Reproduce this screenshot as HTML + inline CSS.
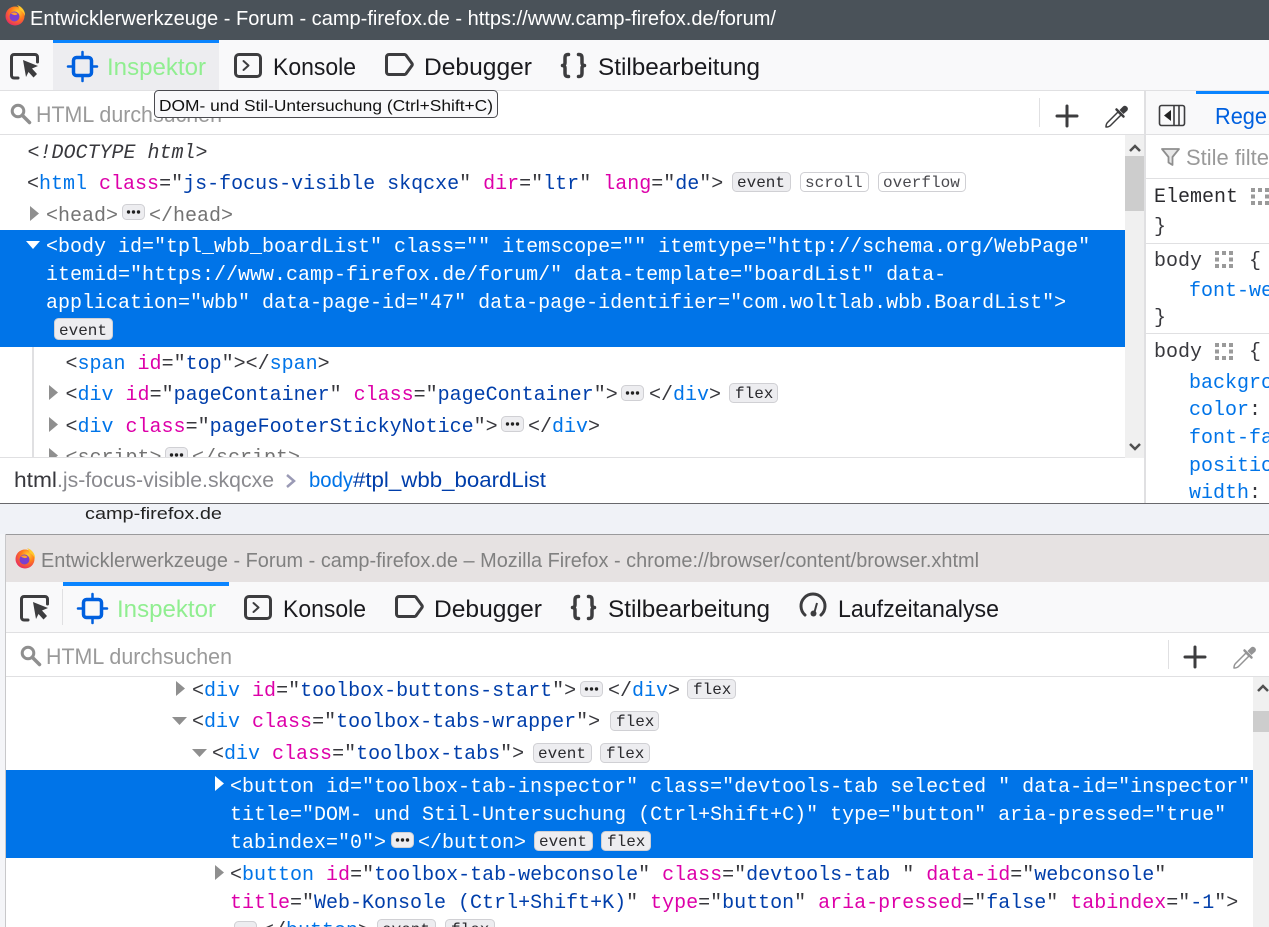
<!DOCTYPE html>
<html lang="de"><head><meta charset="utf-8"><title>Entwicklerwerkzeuge</title>
<style>
html,body{margin:0;padding:0;width:1269px;height:927px;overflow:hidden;background:#fff}
svg{display:block}
text{white-space:pre}
.s{font-family:"Liberation Sans",sans-serif}
.m{font-family:"Liberation Mono",monospace;font-size:20px;fill:#38383d}
.b{font-family:"Liberation Mono",monospace;font-size:16px;fill:#2a2a2e}
.tab{font-family:"Liberation Sans",sans-serif;font-size:24px;fill:#1a1a1e}
.ins{font-family:"Liberation Sans",sans-serif;font-size:24px;fill:#90ee90}
.g{font-family:"Liberation Sans",sans-serif;font-size:22px;fill:#9a9a9a}
.t{fill:#0074e8}.a{fill:#dd00a9}.v{fill:#003eaa}.d{fill:#737373}
.w{fill:#fff}.dg{fill:#38383d}
.ic{fill:none;stroke:#3d3d3f;stroke-width:3;stroke-linecap:round;stroke-linejoin:round}
</style></head><body>
<svg width="1269" height="927" viewBox="0 0 1269 927" xmlns="http://www.w3.org/2000/svg">
<defs>
<radialGradient id="ff" cx="65%" cy="30%" r="80%"><stop offset="0" stop-color="#ffd12e"/><stop offset=".45" stop-color="#ff7a1c"/><stop offset="1" stop-color="#e5236a"/></radialGradient>
<g id="fox"><circle cx="10" cy="11" r="9.500" fill="url(#ff)"/><path d="M12 0c5 1.500 8.500 6 8 11-1-3-3-5-5.500-6 0-2-1-3.500-2.500-5z" fill="#ffc72b"/><circle cx="9.500" cy="11.500" r="5" fill="#7a3fd0"/><path d="M6 8.500c2-1.500 5-1.500 6.500.5-1 1.500-4 1.500-6.500-.5z" fill="#ff9d2e"/></g>
<g id="pick"><path class="ic" d="M8 25H4a2.500 2.500 0 0 1-2.500-2.500V4A2.500 2.500 0 0 1 4 1.500h21A2.500 2.500 0 0 1 27.500 4v5"/><path d="M13 7l15 6-6 2.500 5 5.500-3.500 3.500-5-5.500L16 24z" fill="#3d3d3f"/></g>
<g id="insp"><rect x="5.500" y="5.500" width="18" height="18" rx="3" fill="none" stroke="#0060df" stroke-width="3.500"/><path d="M14.500 0v5M14.500 24v5M0 14.500h5M24 14.500h5" stroke="#0060df" stroke-width="2.500" stroke-linecap="round"/></g>
<g id="con"><rect x="1.500" y="1.500" width="25" height="22" rx="3.500" class="ic"/><path d="M9.500 8l5 4.500-5 4.500" fill="none" stroke="#3d3d3f" stroke-width="2" stroke-linecap="round" stroke-linejoin="round"/></g>
<g id="dbg"><path class="ic" d="M4 1.500h15.500a2 2 0 0 1 1.500.7l6 8.300a2 2 0 0 1 0 2l-6 8.300a2 2 0 0 1-1.500.7H4a2.500 2.500 0 0 1-2.500-2.500V4A2.500 2.500 0 0 1 4 1.500z"/></g>
<g id="sty"><path d="M7.500 1.500C4 1.500 4 3 4 6v4c0 1.500-1 2.500-2.500 2.500C3 12.500 4 13.500 4 15v4c0 3 0 4.500 3.500 4.500M17.500 1.500C21 1.500 21 3 21 6v4c0 1.500 1 2.500 2.500 2.500-1.500 0-2.500 1-2.500 2.500v4c0 3 0 4.500-3.500 4.500" fill="none" stroke="#3d3d3f" stroke-width="3.500" stroke-linecap="round" stroke-linejoin="round"/></g>
<g id="mag"><circle cx="8" cy="8" r="5.800" fill="none" stroke="#8f8f8f" stroke-width="3"/><path d="M12.500 12.500l7 7" stroke="#8f8f8f" stroke-width="3.500" stroke-linecap="round"/></g>
<g id="plus"><path d="M11 1v20M1 11h20" stroke="#3d3d3f" stroke-width="3" stroke-linecap="round"/></g>
<g id="drop"><path d="M13 8L2.500 18.500C1.500 19.500 1 21.500 1 23c1.500 0 3.500-.5 4.500-1.500L16 11z" fill="#fff" stroke="#3d3d3f" stroke-width="1.500" stroke-linejoin="round"/><path d="M11.500 5.500l7 7" stroke="#3d3d3f" stroke-width="2.500" stroke-linecap="round"/><path d="M14.500 6l3.500-3.500a3 3 0 0 1 4.200 4.200L18.500 10z" fill="#3d3d3f"/></g>
<g id="dots"><rect x="0" y="0" width="4" height="4"/><rect x="7" y="0" width="4" height="4"/><rect x="14" y="0" width="4" height="4"/><rect x="0" y="6.500" width="4" height="4"/><rect x="14" y="6.500" width="4" height="4"/><rect x="0" y="13" width="4" height="4"/><rect x="7" y="13" width="4" height="4"/><rect x="14" y="13" width="4" height="4"/></g>
<g id="more"><rect x=".5" y=".5" width="22" height="15" rx="4" fill="#ededf0" stroke="#d0d0d4"/><circle cx="6.500" cy="8" r="1.700" fill="#222"/><circle cx="11.500" cy="8" r="1.700" fill="#222"/><circle cx="16.500" cy="8" r="1.700" fill="#222"/></g>
</defs>

<!-- top window -->
<rect width="1269" height="40" fill="#4a5259"/>
<use href="#fox" x="5" y="5"/>
<text x="30" y="25" class="s" font-size="20" fill="#fff" textLength="746" lengthAdjust="spacingAndGlyphs">Entwicklerwerkzeuge - Forum - camp-firefox.de - https://www.camp-firefox.de/forum/</text>

<rect y="40" width="1269" height="50" fill="#f9f9fa"/>
<rect y="90" width="1269" height="1" fill="#e0e0e2"/>
<rect x="53" y="40" width="166" height="50" fill="#ededf0"/>
<rect x="53" y="40" width="166" height="3" fill="#0a84ff"/>
<use href="#pick" x="10" y="53"/>
<use href="#insp" x="68" y="52"/>
<text x="107" y="75" class="ins" textLength="99" lengthAdjust="spacingAndGlyphs">Inspektor</text>
<use href="#con" x="234" y="53"/>
<text x="273" y="75" class="tab" textLength="83" lengthAdjust="spacingAndGlyphs">Konsole</text>
<use href="#dbg" x="385" y="53"/>
<text x="424" y="75" class="tab" textLength="108" lengthAdjust="spacingAndGlyphs">Debugger</text>
<use href="#sty" x="561" y="53"/>
<text x="598" y="75" class="tab" textLength="162" lengthAdjust="spacingAndGlyphs">Stilbearbeitung</text>

<use href="#mag" x="10" y="103"/>
<text x="36" y="122" class="g" textLength="186" lengthAdjust="spacingAndGlyphs">HTML durchsuchen</text>
<rect x="1039" y="98" width="1" height="29" fill="#e0e0e2"/>
<use href="#plus" x="1056" y="105"/>
<use href="#drop" x="1105" y="104"/>
<rect y="134" width="1145" height="1" fill="#e0e0e2"/>

<!-- top tree -->
<rect x="1125" y="135" width="19" height="323" fill="#f0f0f0"/>
<rect x="1125" y="156" width="19" height="55" fill="#cdcdcd"/>
<path d="M1130 151l5-5 5 5" fill="none" stroke="#505050" stroke-width="2.500"/>
<path d="M1130 444l5 5 5-5" fill="none" stroke="#505050" stroke-width="2.500"/>
<rect y="230" width="1125" height="117" fill="#0074e8"/>
<rect x="32" y="347" width="2" height="111" fill="#e0e0e2"/>

<text x="27.500" y="158" class="m" font-style="italic">&lt;!DOCTYPE html&gt;</text>
<text x="27" y="189" class="m">&lt;<tspan class="t">html</tspan> <tspan class="a">class</tspan>="<tspan class="v">js-focus-visible skqcxe</tspan>" <tspan class="a">dir</tspan>="<tspan class="v">ltr</tspan>" <tspan class="a">lang</tspan>="<tspan class="v">de</tspan>"&gt;</text>
<g><rect x="732.500" y="172.500" width="58" height="19" rx="4" fill="#ededf0" stroke="#d0d0d4"/><text x="737" y="187" class="b">event</text>
<rect x="800.500" y="172.500" width="68" height="19" rx="4" fill="#fff" stroke="#d0d0d4"/><text x="805" y="187" class="b" style="fill:#4a4a4f">scroll</text>
<rect x="878.500" y="172.500" width="87" height="19" rx="4" fill="#fff" stroke="#d0d0d4"/><text x="883" y="187" class="b" style="fill:#4a4a4f">overflow</text></g>
<path d="M30 206l9 7.500-9 7.500z" fill="#8f8f8f"/>
<text x="46" y="221" class="m d">&lt;head&gt;</text><use href="#more" x="122" y="204"/><text x="149" y="221" class="m d">&lt;/head&gt;</text>

<path d="M26 241h14l-7 8z" fill="#fff"/>
<text x="46" y="252" class="m w">&lt;body id="tpl_wbb_boardList" class="" itemscope="" itemtype="http://schema.org/WebPage"</text>
<text x="46" y="280" class="m w">itemid="https://www.camp-firefox.de/forum/" data-template="boardList" data-</text>
<text x="46" y="308" class="m w">application="wbb" data-page-id="47" data-page-identifier="com.woltlab.wbb.BoardList"&gt;</text>
<rect x="54.500" y="318.500" width="58" height="21" rx="4" fill="#ededf0" stroke="#d0d0d4"/><text x="59" y="335" class="b">event</text>

<text x="65.500" y="369" class="m">&lt;<tspan class="t">span</tspan> <tspan class="a">id</tspan>="<tspan class="v">top</tspan>"&gt;&lt;/<tspan class="t">span</tspan>&gt;</text>
<path d="M49 385l9 7.500-9 7.500z" fill="#8f8f8f"/>
<text x="65.500" y="400" class="m">&lt;<tspan class="t">div</tspan> <tspan class="a">id</tspan>="<tspan class="v">pageContainer</tspan>" <tspan class="a">class</tspan>="<tspan class="v">pageContainer</tspan>"&gt;</text>
<use href="#more" x="621" y="385"/>
<text x="649" y="400" class="m">&lt;/<tspan class="t">div</tspan>&gt;</text>
<rect x="729.500" y="383.500" width="48" height="19" rx="4" fill="#ededf0" stroke="#d0d0d4"/><text x="735" y="398" class="b">flex</text>
<path d="M49 417l9 7.500-9 7.500z" fill="#8f8f8f"/>
<text x="65.500" y="432" class="m">&lt;<tspan class="t">div</tspan> <tspan class="a">class</tspan>="<tspan class="v">pageFooterStickyNotice</tspan>"&gt;</text>
<use href="#more" x="501" y="416"/>
<text x="528" y="432" class="m">&lt;/<tspan class="t">div</tspan>&gt;</text>
<path d="M49 448l9 7.500-9 7.500z" fill="#8f8f8f"/>
<text x="65.500" y="463" class="m d">&lt;script&gt;</text><use href="#more" x="165" y="447"/><text x="192" y="463" class="m d">&lt;/script&gt;</text>

<!-- breadcrumb -->
<rect y="458" width="1145" height="45" fill="#fff"/>
<rect y="457" width="1125" height="1" fill="#e0e0e2"/>
<text x="14" y="487" class="s" font-size="21" fill="#38383d" textLength="43" lengthAdjust="spacingAndGlyphs">html</text>
<text x="57" y="487" class="s" font-size="21" fill="#8a8a8f" textLength="217" lengthAdjust="spacingAndGlyphs">.js-focus-visible.skqcxe</text>
<path d="M287 475l7 6-7 6" fill="none" stroke="#9a9ab5" stroke-width="2.500"/>
<text x="309" y="487" class="s" font-size="21" fill="#0074e8" textLength="44" lengthAdjust="spacingAndGlyphs">body</text>
<text x="353" y="487" class="s" font-size="21" fill="#003eaa" textLength="193" lengthAdjust="spacingAndGlyphs">#tpl_wbb_boardList</text>

<!-- sidebar -->
<rect x="1144" y="91" width="2" height="412" fill="#e0e0e2"/>
<rect x="1146" y="91" width="123" height="43" fill="#f9f9fa"/>
<rect x="1196" y="91" width="73" height="3" fill="#0a84ff"/>
<rect x="1159.500" y="105.500" width="25" height="20" rx="2" fill="none" stroke="#3d3d3f" stroke-width="1.600"/>
<path d="M1174 106v19M1179 106v19" stroke="#3d3d3f" stroke-width="1.600"/>
<path d="M1171 110v11l-7-5.500z" fill="#222"/>
<text x="1215" y="124" class="s" font-size="23" fill="#0060df" textLength="52" lengthAdjust="spacingAndGlyphs">Rege</text>
<rect x="1146" y="134" width="123" height="1" fill="#e0e0e2"/>
<path d="M1162 149h17l-6.500 8v8l-4-2.500v-5.500z" fill="#e8e8e8" stroke="#8f8f8f" stroke-width="1.800" stroke-linejoin="round"/>
<text x="1186" y="165" class="g" textLength="83" lengthAdjust="spacingAndGlyphs">Stile filte</text>
<rect x="1146" y="178" width="123" height="1" fill="#e0e0e2"/>
<text x="1154" y="202" class="m" style="fill:#2a2a2e">Element</text>
<use href="#dots" x="1251" y="188" fill="#9a9a9a"/>
<text x="1154" y="232" class="m">}</text>
<rect x="1146" y="243" width="123" height="1" fill="#e0e0e2"/>
<text x="1154" y="266" class="m">body</text><use href="#dots" x="1215" y="251" fill="#9a9a9a"/><text x="1249" y="266" class="m">{</text>
<text x="1189" y="296" class="m t">font-we</text>
<text x="1154" y="323" class="m">}</text>
<rect x="1146" y="333" width="123" height="1" fill="#e0e0e2"/>
<text x="1154" y="357" class="m">body</text><use href="#dots" x="1215" y="343" fill="#9a9a9a"/><text x="1249" y="357" class="m">{</text>
<text x="1189" y="388" class="m t">backgro</text>
<text x="1189" y="415" class="m"><tspan class="t">color</tspan>:</text>
<text x="1189" y="443" class="m t">font-fa</text>
<text x="1189" y="471" class="m t">positio</text>
<text x="1189" y="498" class="m"><tspan class="t">width</tspan>:</text>

<!-- tooltip -->
<rect x="154.500" y="90.500" width="343" height="27" rx="4" fill="#f9f9fb" stroke="#4a4a4f"/>
<text x="159" y="111" class="s" font-size="16" fill="#111" textLength="334" lengthAdjust="spacingAndGlyphs">DOM- und Stil-Untersuchung (Ctrl+Shift+C)</text>

<!-- divider & page strip -->
<rect y="504" width="1269" height="30" fill="#f0f2f7"/>
<rect y="503" width="1269" height="1" fill="#68686c"/>
<rect y="534" width="5" height="393" fill="#f4f5f8"/>
<text x="85" y="519" class="s" font-size="17" fill="#222" textLength="137" lengthAdjust="spacingAndGlyphs">camp-firefox.de</text>

<!-- bottom window -->
<rect x="5" y="534" width="1264" height="1" fill="#9a9a9c"/>
<rect x="5" y="534" width="1" height="393" fill="#c8c8ca"/>
<rect x="6" y="535" width="1263" height="47" fill="#e6e2e2"/>
<use href="#fox" x="15" y="548"/>
<text x="41" y="567" class="s" font-size="20" fill="#808080" textLength="938" lengthAdjust="spacingAndGlyphs">Entwicklerwerkzeuge - Forum - camp-firefox.de – Mozilla Firefox - chrome://browser/content/browser.xhtml</text>
<rect x="6" y="582" width="1263" height="50" fill="#f9f9fa"/>
<rect x="6" y="632" width="1263" height="1" fill="#e0e0e2"/>
<rect x="63" y="582" width="166" height="4" fill="#0a84ff"/>
<rect x="62" y="589" width="1" height="36" fill="#e0e0e2"/>
<use href="#pick" x="20" y="595"/>
<use href="#insp" x="78" y="594"/>
<text x="117" y="617" class="ins" textLength="99" lengthAdjust="spacingAndGlyphs">Inspektor</text>
<use href="#con" x="244" y="595"/>
<text x="283" y="617" class="tab" textLength="83" lengthAdjust="spacingAndGlyphs">Konsole</text>
<use href="#dbg" x="395" y="595"/>
<text x="434" y="617" class="tab" textLength="108" lengthAdjust="spacingAndGlyphs">Debugger</text>
<use href="#sty" x="571" y="595"/>
<text x="608" y="617" class="tab" textLength="162" lengthAdjust="spacingAndGlyphs">Stilbearbeitung</text>
<path d="M805 615a12 12 0 1 1 16 0" fill="none" stroke="#3d3d3f" stroke-width="3" stroke-linecap="round"/>
<path d="M817 603l-2.500 9" stroke="#3d3d3f" stroke-width="2"/><circle cx="813.500" cy="613.500" r="3" fill="#3d3d3f"/>
<text x="838" y="617" class="tab" textLength="161" lengthAdjust="spacingAndGlyphs">Laufzeitanalyse</text>

<use href="#mag" x="20" y="645"/>
<text x="46" y="664" class="g" textLength="186" lengthAdjust="spacingAndGlyphs">HTML durchsuchen</text>
<rect x="1168" y="640" width="1" height="29" fill="#e0e0e2"/>
<use href="#plus" x="1184" y="646"/>
<g opacity=".55"><use href="#drop" x="1233" y="645"/></g>
<rect x="6" y="676" width="1263" height="1" fill="#e0e0e2"/>

<rect x="1253" y="677" width="16" height="250" fill="#f0f0f0"/>
<rect x="1253" y="711" width="16" height="21" fill="#cdcdcd"/>
<path d="M1258 691l5-5 5 5" fill="none" stroke="#505050" stroke-width="2.500"/>

<path d="M176 681l9 7.500-9 7.500z" fill="#8f8f8f"/>
<text x="192" y="696" class="m">&lt;<tspan class="t">div</tspan> <tspan class="a">id</tspan>="<tspan class="v">toolbox-buttons-start</tspan>"&gt;</text>
<use href="#more" x="580" y="681"/>
<text x="608" y="696" class="m">&lt;/<tspan class="t">div</tspan>&gt;</text>
<rect x="687.500" y="679.500" width="48" height="19" rx="4" fill="#ededf0" stroke="#d0d0d4"/><text x="693" y="694" class="b">flex</text>

<path d="M172 717h15l-7.500 8z" fill="#8f8f8f"/>
<text x="192" y="727" class="m">&lt;<tspan class="t">div</tspan> <tspan class="a">class</tspan>="<tspan class="v">toolbox-tabs-wrapper</tspan>"&gt;</text>
<rect x="610.500" y="711.500" width="48" height="19" rx="4" fill="#ededf0" stroke="#d0d0d4"/><text x="616" y="726" class="b">flex</text>

<path d="M192 749h15l-7.500 8z" fill="#8f8f8f"/>
<text x="212" y="759" class="m">&lt;<tspan class="t">div</tspan> <tspan class="a">class</tspan>="<tspan class="v">toolbox-tabs</tspan>"&gt;</text>
<rect x="533.500" y="743.500" width="58" height="19" rx="4" fill="#ededf0" stroke="#d0d0d4"/><text x="538" y="758" class="b">event</text>
<rect x="600.500" y="743.500" width="49" height="19" rx="4" fill="#ededf0" stroke="#d0d0d4"/><text x="606" y="758" class="b">flex</text>

<rect x="6" y="770" width="1247" height="88" fill="#0074e8"/>
<path d="M215 776l9 7.500-9 7.500z" fill="#fff"/>
<text x="230" y="792" class="m w">&lt;button id="toolbox-tab-inspector" class="devtools-tab selected " data-id="inspector"</text>
<text x="230" y="820" class="m w">title="DOM- und Stil-Untersuchung (Ctrl+Shift+C)" type="button" aria-pressed="true"</text>
<text x="230" y="848" class="m w">tabindex="0"&gt;</text>
<use href="#more" x="391" y="832"/>
<text x="418" y="848" class="m w">&lt;/button&gt;</text>
<rect x="534.500" y="831.500" width="58" height="19" rx="4" fill="#ededf0" stroke="#d0d0d4"/><text x="539" y="846" class="b">event</text>
<rect x="601.500" y="831.500" width="49" height="19" rx="4" fill="#ededf0" stroke="#d0d0d4"/><text x="607" y="846" class="b">flex</text>

<path d="M215 865l9 7.500-9 7.500z" fill="#8f8f8f"/>
<text x="230" y="880" class="m">&lt;<tspan class="t">button</tspan> <tspan class="a">id</tspan>="<tspan class="v">toolbox-tab-webconsole</tspan>" <tspan class="a">class</tspan>="<tspan class="v">devtools-tab </tspan>" <tspan class="a">data-id</tspan>="<tspan class="v">webconsole</tspan>"</text>
<text x="230" y="908" class="m"><tspan class="a">title</tspan>="<tspan class="v">Web-Konsole (Ctrl+Shift+K)</tspan>" <tspan class="a">type</tspan>="<tspan class="v">button</tspan>" <tspan class="a">aria-pressed</tspan>="<tspan class="v">false</tspan>" <tspan class="a">tabindex</tspan>="<tspan class="v">-1</tspan>"&gt;</text>
<use href="#more" x="234" y="921"/>
<text x="262" y="936" class="m">&lt;/<tspan class="t">button</tspan>&gt;</text>
<rect x="377.500" y="919.500" width="58" height="19" rx="4" fill="#ededf0" stroke="#d0d0d4"/><text x="382" y="934" class="b">event</text>
<rect x="445.500" y="919.500" width="49" height="19" rx="4" fill="#ededf0" stroke="#d0d0d4"/><text x="451" y="934" class="b">flex</text>
</svg>
</body></html>
